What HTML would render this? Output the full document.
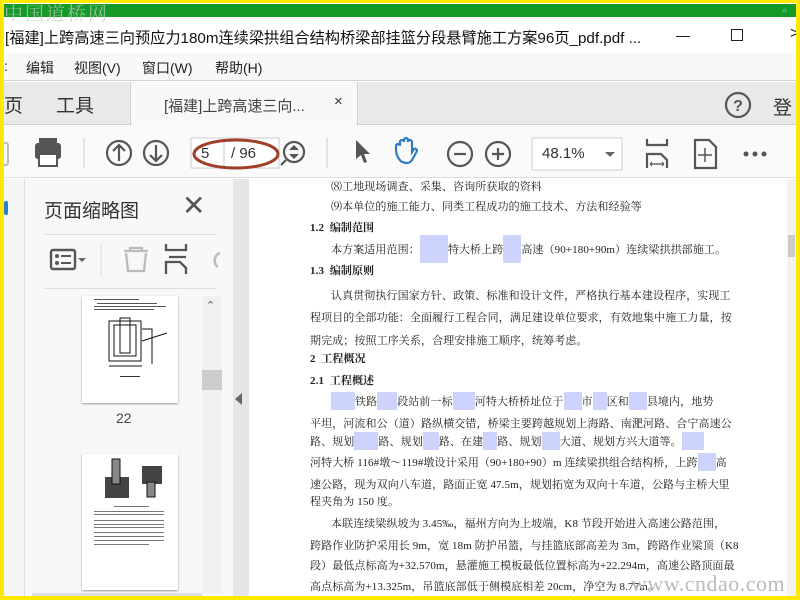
<!DOCTYPE html>
<html><head><meta charset="utf-8"><style>
*{margin:0;padding:0;box-sizing:border-box}
body{width:800px;height:600px;overflow:hidden;position:relative;background:#ffe900;font-family:"Liberation Sans","Noto Sans CJK SC",sans-serif}
.a{position:absolute}
.doc{font-family:"Liberation Serif","Noto Serif CJK SC",serif;font-size:11px;color:#222;white-space:nowrap;letter-spacing:0.1px}
.doc div{line-height:14px}
.b{font-weight:bold}
.m{display:inline-block;position:relative;height:12px;vertical-align:-2px}
.m::before{content:"";position:absolute;left:0;right:0;top:-3px;bottom:-3px;background:#cdd3fb}
.m.t::before{top:-8px;bottom:-8px}
.ic{stroke:#555;fill:none;stroke-width:2.2}
.mn{position:absolute;top:55px;font-size:14px;color:#222;white-space:nowrap}
</style></head><body>
<div class="a" style="left:4px;top:3px;width:792px;height:593px;background:#fff;overflow:hidden">
<div class="a" style="left:0;top:1px;width:792px;height:13px;background:#139a27"></div>
<div class="a" style="left:0;top:-4px;font-family:'Noto Serif CJK SC',serif;font-size:19px;color:rgba(200,200,200,.7);letter-spacing:2px">中国道桥网</div>
<div class="a" style="left:778px;top:2px;font-size:9px;color:#8bc;">»</div>
<div class="a" style="left:1px;top:23px;font-size:15.2px;color:#111;white-space:nowrap">[福建]上跨高速三向预应力180m连续梁拱组合结构桥梁部挂篮分段悬臂施工方案96页_pdf.pdf ...</div>
<div class="a" style="left:672px;top:33px;width:14px;height:1px;background:#222"></div>
<div class="a" style="left:727px;top:26px;width:12px;height:12px;border:1.3px solid #222"></div>
<div class="a" style="left:786px;top:22px;font-size:16px;color:#222">&gt;</div>
<div class="a" style="left:0;top:50px;width:792px;height:28px;background:#f8f8f8;border-bottom:1px solid #d2d2d2"></div>
<div class="mn" style="left:0">:</div>
<div class="mn" style="left:22px">编辑</div>
<div class="mn" style="left:70px">视图(V)</div>
<div class="mn" style="left:138px">窗口(W)</div>
<div class="mn" style="left:211px">帮助(H)</div>
<div class="a" style="left:0;top:79px;width:792px;height:43px;background:#e9e9e9;border-bottom:1px solid #d0d0d0"></div>
<div class="a" style="left:0;top:88px;font-size:19px;color:#333;white-space:nowrap">页</div>
<div class="a" style="left:52px;top:88px;font-size:19px;color:#333;white-space:nowrap">工具</div>
<div class="a" style="left:126px;top:79px;width:228px;height:44px;background:#f8f8f8;border-left:1px solid #d0d0d0;border-right:1px solid #d0d0d0"></div>
<div class="a" style="left:160px;top:92px;font-size:15px;color:#444;white-space:nowrap">[福建]上跨高速三向...</div>
<div class="a" style="left:330px;top:90px;font-size:15px;color:#333">×</div>
<svg class="a" style="left:720px;top:88px" width="28" height="28"><circle cx="14" cy="14" r="12" class="ic"/><text x="14" y="20" text-anchor="middle" font-size="16" font-weight="bold" fill="#555" font-family="Liberation Sans">?</text></svg>
<div class="a" style="left:769px;top:90px;font-size:19px;color:#333">登</div>
<div class="a" style="left:0;top:123px;width:792px;height:52px;background:#fafafa;border-bottom:1px solid #ddd"></div>
<svg class="a" style="left:0;top:125px" width="792" height="50">
<rect x="-6" y="15" width="10" height="22" rx="2" fill="none" stroke="#bbb" stroke-width="2"/>
<rect x="31" y="15" width="26" height="16" rx="3" fill="#555"/><rect x="35" y="10" width="18" height="6" fill="#555"/><rect x="35" y="26" width="18" height="12" fill="#fff" stroke="#555" stroke-width="2"/>
<line x1="80" y1="10" x2="80" y2="40" stroke="#ccc"/>
<circle cx="115" cy="25" r="12" class="ic"/><path d="M115 33V18M109 23l6-6 6 6" class="ic"/>
<circle cx="152" cy="25" r="12" class="ic"/><path d="M152 17v15M146 27l6 6 6-6" class="ic"/>
<rect x="187" y="10" width="88" height="30" fill="#fff" stroke="#ccc"/><line x1="220" y1="10" x2="220" y2="40" stroke="#ccc"/>
<ellipse cx="232" cy="26" rx="42" ry="14" fill="none" stroke="#a0402a" stroke-width="3"/>
<circle cx="290" cy="24" r="10" class="ic"/><path d="M286 22l4-4 4 4M286 26l4 4 4-4" stroke="#555" stroke-width="1.5" fill="#555"/><path d="M282 32l-5 5" class="ic"/>
<line x1="323" y1="10" x2="323" y2="40" stroke="#ccc"/>
<path d="M352 12l14 14h-6l3 8-3 1-3-8-5 4z" fill="#555"/>
<path d="M398 34c-4-3-6-8-6-12v-4a2 2 0 014 0v-4a2 2 0 014 0v-2a2 2 0 014 0v2a2 2 0 014 0v10l2-3a2 2 0 013 2l-5 9c-2 3-4 3-6 3z" fill="none" stroke="#2f7cc4" stroke-width="2.2"/>
<circle cx="456" cy="26" r="12" class="ic"/><path d="M450 26h12" class="ic"/>
<circle cx="494" cy="26" r="12" class="ic"/><path d="M488 26h12M494 20v12" class="ic"/>
<rect x="528" y="10" width="90" height="32" fill="#fff" stroke="#ccc"/>
<path d="M601 24h10l-5 5z" fill="#666"/>
<path d="M643 11v6h20v-6M643 40v-14h14l6 6v8" class="ic"/><path d="M646 36h14" stroke="#555" stroke-width="1.3"/><path d="M646 36l2-2M646 36l2 2M660 36l-2-2M660 36l-2 2" stroke="#555" stroke-width="1"/>
<path d="M691 12h14l7 7v21h-21z" class="ic"/><path d="M701 20v14M694 27h14" stroke="#555" stroke-width="1.5"/>
<circle cx="742" cy="26" r="2.5" fill="#555"/><circle cx="751" cy="26" r="2.5" fill="#555"/><circle cx="760" cy="26" r="2.5" fill="#555"/>
</svg>
<div class="a" style="left:197px;top:142px;font-size:15px;color:#333">5</div>
<div class="a" style="left:227px;top:142px;font-size:15px;color:#333">/ 96</div>
<div class="a" style="left:538px;top:142px;font-size:15px;color:#333">48.1%</div>
<div class="a" style="left:0;top:176px;width:21px;height:417px;background:#f5f5f5;border-right:1px solid #ddd"></div>
<div class="a" style="left:0;top:198px;width:4px;height:14px;background:#2f7cc4;border-radius:2px"></div>
<div class="a" style="left:21px;top:176px;width:208px;height:417px;background:#f8f8f8"></div>
<div class="a" style="left:40px;top:193px;font-size:19px;color:#333">页面缩略图</div>
<div class="a" style="left:178px;top:186px;font-size:28px;color:#555;font-weight:300">✕</div>
<div class="a" style="left:40px;top:231px;width:173px;height:1px;background:#ddd"></div>
<div class="a" style="left:40px;top:285px;width:173px;height:1px;background:#ddd"></div>
<svg class="a" style="left:40px;top:238px" width="180" height="40">
<rect x="7" y="9" width="24" height="19" rx="2" fill="none" stroke="#555" stroke-width="2.4"/><circle cx="13" cy="15" r="2" fill="#555"/><circle cx="13" cy="22" r="2" fill="#555"/><path d="M17 15h10M17 22h10" stroke="#555" stroke-width="2"/>
<path d="M34 17h8l-4 4z" fill="#666"/>
<line x1="57" y1="2" x2="57" y2="36" stroke="#ddd"/>
<path d="M80 10h24M86 10V7h12v3M82 12l2 18h16l2-18" fill="none" stroke="#bbb" stroke-width="2.3"/>
<path d="M122 3v6h20v-6M122 33v-12h14l6 6v6M125 16h17" fill="none" stroke="#555" stroke-width="2.3"/>
<path d="M176 12a8 8 0 00-2 14" fill="none" stroke="#bbb" stroke-width="2.5"/>
</svg>
<div class="a" style="left:78px;top:293px;width:96px;height:107px;background:#fff;box-shadow:0 1px 2px #999">
<svg width="96" height="107"><g fill="#555"><rect x="12" y="3" width="45" height="1"/><rect x="15" y="7" width="60" height="1"/><rect x="12" y="10" width="72" height="1"/><rect x="12" y="13" width="60" height="1"/></g>
<g fill="none" stroke="#111"><rect x="27" y="25" width="32" height="40"/><rect x="38" y="22" width="10" height="35"/><rect x="32" y="29" width="22" height="31"/><path d="M27 70h33M60 33h10v35M60 45l25-8"/></g>
<rect x="38" y="80" width="20" height="1" fill="#333"/></svg></div>
<div class="a" style="left:112px;top:407px;font-size:14px;color:#444">22</div>
<div class="a" style="left:78px;top:451px;width:96px;height:136px;background:#fff;box-shadow:0 1px 2px #999">
<svg width="96" height="136"><rect x="23" y="23" width="24" height="21" fill="#444"/><rect x="30" y="5" width="8" height="25" fill="#888" stroke="#111"/><rect x="60" y="12" width="20" height="18" fill="#444"/><rect x="65" y="28" width="8" height="15" fill="#888" stroke="#111"/>
<g fill="#777"><rect x="32" y="52" width="35" height="1"/><rect x="12" y="57" width="70" height="1"/><rect x="12" y="60" width="70" height="1"/><rect x="12" y="66" width="70" height="1"/><rect x="12" y="70" width="70" height="1"/><rect x="12" y="73" width="70" height="1"/><rect x="12" y="78" width="70" height="1"/><rect x="12" y="82" width="70" height="1"/><rect x="12" y="86" width="70" height="1"/><rect x="12" y="90" width="55" height="1"/></g></svg></div>
<div class="a" style="left:198px;top:293px;width:20px;height:298px;background:#f0f0f0"></div>
<div class="a" style="left:202px;top:296px;font-size:11px;color:#555">⌃</div>
<div class="a" style="left:198px;top:367px;width:20px;height:20px;background:#ccc"></div>
<div class="a" style="left:28px;top:590px;width:170px;height:3px;background:#ddd"></div>
<div class="a" style="left:229px;top:176px;width:16px;height:417px;background:#e6e6e6"></div>
<div class="a" style="left:231px;top:390px;width:0;height:0;border-top:6px solid transparent;border-bottom:6px solid transparent;border-right:7px solid #666"></div>
<div class="a" style="left:245px;top:176px;width:547px;height:417px;background:#fff"></div>
<div class="a" style="left:783px;top:176px;width:9px;height:417px;background:#f2f2f2"></div>
<div class="a" style="left:784px;top:232px;width:7px;height:22px;background:#ccc"></div>
<div class="doc">
<div class="a" style="left:327px;top:177px">⑻工地现场调查、采集、咨询所获取的资料</div>
<div class="a" style="left:327px;top:197px">⑼本单位的施工能力、同类工程成功的施工技术、方法和经验等</div>
<div class="a b" style="left:306px;top:218px">1.2&nbsp; 编制范围</div>
<div class="a" style="left:327px;top:240px">本方案适用范围：<span class="m t" style="width:28px"></span>特大桥上跨<span class="m t" style="width:18px"></span>高速（90+180+90m）连续梁拱拱部施工。</div>
<div class="a b" style="left:306px;top:261px">1.3&nbsp; 编制原则</div>
<div class="a" style="left:327px;top:286px">认真贯彻执行国家方针、政策、标准和设计文件，严格执行基本建设程序，实现工</div>
<div class="a" style="left:306px;top:308px">程项目的全部功能：全面履行工程合同，满足建设单位要求，有效地集中施工力量，按</div>
<div class="a" style="left:306px;top:331px">期完成；按照工序关系，合理安排施工顺序，统筹考虑。</div>
<div class="a b" style="left:306px;top:349px">2&nbsp; 工程概况</div>
<div class="a b" style="left:306px;top:371px">2.1&nbsp; 工程概述</div>
<div class="a" style="left:327px;top:392px"><span class="m" style="width:24px"></span>铁路<span class="m" style="width:20px"></span>段站前一标<span class="m" style="width:22px"></span>河特大桥桥址位于<span class="m" style="width:18px"></span>市<span class="m" style="width:14px"></span>区和<span class="m" style="width:18px"></span>县境内，地势</div>
<div class="a" style="left:306px;top:414px">平坦，河流和公（道）路纵横交错，桥梁主要跨越规划上海路、南淝河路、合宁高速公</div>
<div class="a" style="left:306px;top:432px">路、规划<span class="m" style="width:24px"></span>路、规划<span class="m" style="width:16px"></span>路、在建<span class="m" style="width:14px"></span>路、规划<span class="m" style="width:18px"></span>大道、规划方兴大道等。<span class="m" style="width:22px"></span></div>
<div class="a" style="left:306px;top:453px">河特大桥 116#墩～119#墩设计采用（90+180+90）m 连续梁拱组合结构桥，上跨<span class="m" style="width:18px"></span>高</div>
<div class="a" style="left:306px;top:475px">速公路，现为双向八车道，路面正宽 47.5m，规划拓宽为双向十车道，公路与主桥大里</div>
<div class="a" style="left:306px;top:492px">程夹角为 150 度。</div>
<div class="a" style="left:327px;top:514px">本联连续梁纵坡为 3.45‰，福州方向为上坡端，K8 节段开始进入高速公路范围，</div>
<div class="a" style="left:306px;top:536px">跨路作业防护采用长 9m，宽 18m 防护吊篮，与挂篮底部高差为 3m，跨路作业梁顶（K8</div>
<div class="a" style="left:306px;top:556px">段）最低点标高为+32.570m，悬灌施工模板最低位置标高为+22.294m，高速公路顶面最</div>
<div class="a" style="left:306px;top:577px">高点标高为+13.325m，吊篮底部低于侧模底相差 20cm，净空为 8.77m。</div>
</div>
<div class="a" style="left:627px;top:568px;font-family:'Liberation Serif',serif;font-size:22px;color:#bbb;letter-spacing:0.5px">www.cndao.com</div>
</div>
</body></html>
